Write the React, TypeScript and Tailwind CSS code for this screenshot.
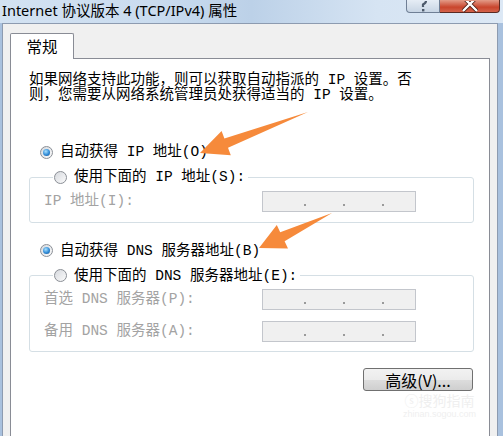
import React from 'react';

const body = "[font-family:'Liberation_Mono','Noto_Sans_CJK_SC',monospace]";

type RadioProps = Readonly<{ checked?: boolean }>;

const Radio = ({ checked }: RadioProps) => (
    <span className="flex h-[13px] w-[13px] shrink-0 items-center justify-center rounded-full border border-[#8b8f96] bg-[linear-gradient(135deg,#d6d9de,#fbfbfb)]">
        {checked && (
            <span className="h-[7px] w-[7px] rounded-full bg-[radial-gradient(circle_at_40%_35%,#a9e1ff,#2f8ad6_55%,#1a4f86)]" />
        )}
    </span>
);

const IpBox = () => (
    <div className="flex h-[21px] w-[154px] items-end gap-[37px] border border-[#c3c6cc] bg-[#f0f0f0] pb-[5px] pl-[41px]">
        <span className="h-[2px] w-[2px] bg-[#9a9a9a]" />
        <span className="h-[2px] w-[2px] bg-[#9a9a9a]" />
        <span className="h-[2px] w-[2px] bg-[#9a9a9a]" />
    </div>
);

const Arrow = ({ points }: { points: string }) => (
    <polygon points={points} fill="#f68a3b" />
);

export default function App() {
    return (
        <div className="relative h-[436px] w-[503px] overflow-hidden bg-[#a9c1de]">
            {/* title bar */}
            <div className="relative flex h-[23px] items-start bg-[linear-gradient(90deg,#d3e2f2_0%,#cadcef_30%,#bcd1e8_50%,#d6e4f3_75%,#dce8f5_100%)]">
                <span className="pl-[2px] pt-[1px] text-[14.5px] leading-[18px] text-black [font-family:'Noto_Sans','Noto_Sans_CJK_SC',sans-serif]">
                    Internet 协议版本 4 (TCP/IPv4) 属性
                </span>
                <div className="absolute left-[406px] top-0 flex h-[13px]">
                    <div className="flex w-[34px] items-end justify-center overflow-hidden rounded-bl-[4px] border border-t-0 border-[#6f7f95] bg-[linear-gradient(180deg,#e6edf5,#c8d5e4)]">
                        <svg width="10" height="11" viewBox="0 0 10 11">
                            <path d="M2 0 Q2 -3 5 -3 Q8 -3 8 0 Q8 2 5 3.5 L5 6" fill="none" stroke="#4d5a6b" strokeWidth="2.2" />
                            <rect x="4" y="8" width="2.4" height="2.4" fill="#4d5a6b" />
                        </svg>
                    </div>
                    <div className="flex w-[60px] items-end justify-center overflow-hidden rounded-br-[4px] border border-l-0 border-t-0 border-[#5a2a22] bg-[linear-gradient(180deg,#e39b88,#c9452d_60%,#d4634b)]">
                        <svg width="16" height="12" viewBox="0 0 16 12" className="-mb-[1px]">
                            <path d="M1 -4 L15 10 M15 -4 L1 10" stroke="#4a1c14" strokeWidth="4" />
                            <path d="M1 -4 L15 10 M15 -4 L1 10" stroke="#ffffff" strokeWidth="2.4" />
                        </svg>
                    </div>
                </div>
            </div>

            {/* client area */}
            <div className="ml-[2px] mr-[5px] h-[413px] border-l border-r border-t border-[#8d9bb0] bg-[#f0f0f0] pl-[7px] pr-[7px] pt-[9px]">
                <div className="relative z-10 -mb-px flex h-[26px] w-[64px] items-start justify-center rounded-t-[2px] border border-b-0 border-[#898c95] bg-white pt-[4px]">
                    <span className="text-[15.5px] leading-[17px] text-black [font-family:'Noto_Sans_CJK_SC',sans-serif]">常规</span>
                </div>
                <div className={`h-[400px] border border-b-0 border-[#898c95] bg-white pl-[18px] pr-[15px] text-[14.5px] text-black ${body}`}>
                    <p className="mt-[14px] leading-[15px]">
                        如果网络支持此功能，则可以获取自动指派的 IP 设置。否
                        <br />
                        则，您需要从网络系统管理员处获得适当的 IP 设置。
                    </p>

                    <div className="ml-[11px] mt-[41px] flex h-[16px] items-center gap-[7px] leading-[16px]">
                        <Radio checked />
                        <span>自动获得 IP 地址(O)</span>
                    </div>

                    <fieldset className="mt-[9px] rounded-[3px] border border-[#d5dfe5] pb-[9px] pl-[14px] pt-[6px]">
                        <legend className="ml-[9px] flex h-[16px] items-center gap-[7px] pl-[1px] pr-[3px] leading-[16px]">
                            <Radio />
                            <span>使用下面的 IP 地址(S):</span>
                        </legend>
                        <div className="flex items-center text-[#a3a3a3]">
                            <span className="w-[218px]">IP 地址(I):</span>
                            <IpBox />
                        </div>
                    </fieldset>

                    <div className="ml-[11px] mt-[20px] flex h-[16px] items-center gap-[7px] leading-[16px]">
                        <Radio checked />
                        <span>自动获得 DNS 服务器地址(B)</span>
                    </div>

                    <fieldset className="mt-[9px] flex flex-col gap-[10px] rounded-[3px] border border-[#d5dfe5] pb-[9px] pl-[14px] pt-[5px]">
                        <legend className="ml-[9px] flex h-[16px] items-center gap-[7px] pl-[1px] pr-[3px] leading-[16px]">
                            <Radio />
                            <span>使用下面的 DNS 服务器地址(E):</span>
                        </legend>
                        <div className="flex items-center text-[#a3a3a3]">
                            <span className="w-[218px]">首选 DNS 服务器(P):</span>
                            <IpBox />
                        </div>
                        <div className="flex items-center text-[#a3a3a3]">
                            <span className="w-[218px]">备用 DNS 服务器(A):</span>
                            <IpBox />
                        </div>
                    </fieldset>

                    <div className="mr-px mt-[16px] flex justify-end">
                        <button className="flex h-[23px] w-[110px] items-center justify-center rounded-[3px] border border-[#707070] bg-[linear-gradient(180deg,#f2f2f2_0%,#ebebeb_50%,#dddddd_51%,#cfcfcf_100%)] text-[16px] leading-[18px] text-black [font-family:'Noto_Sans_CJK_SC',sans-serif]">
                            高级(V)...
                        </button>
                    </div>
                </div>
            </div>

            {/* watermark */}
            <div className="absolute left-[403px] top-[393px] flex flex-col items-center gap-[3px] text-[#efefef] [font-family:'Noto_Sans_CJK_SC',sans-serif]">
                <span className="text-[14px] leading-[14px]">ⓢ搜狗指南</span>
                <span className="text-[9px] leading-[9px] [font-family:'Liberation_Sans',sans-serif]">zhinan.sogou.com</span>
            </div>

            {/* annotation arrows */}
            <svg className="pointer-events-none absolute left-0 top-0" width="503" height="436">
                <Arrow points="200,153 221.6,130.9 224.4,138.4 308,112 228,147.8 230.8,155.3" />
                <Arrow points="259,248 276.8,225.1 280.2,232.3 332,213 284.6,241.3 288,248.5" />
            </svg>
        </div>
    );
}
